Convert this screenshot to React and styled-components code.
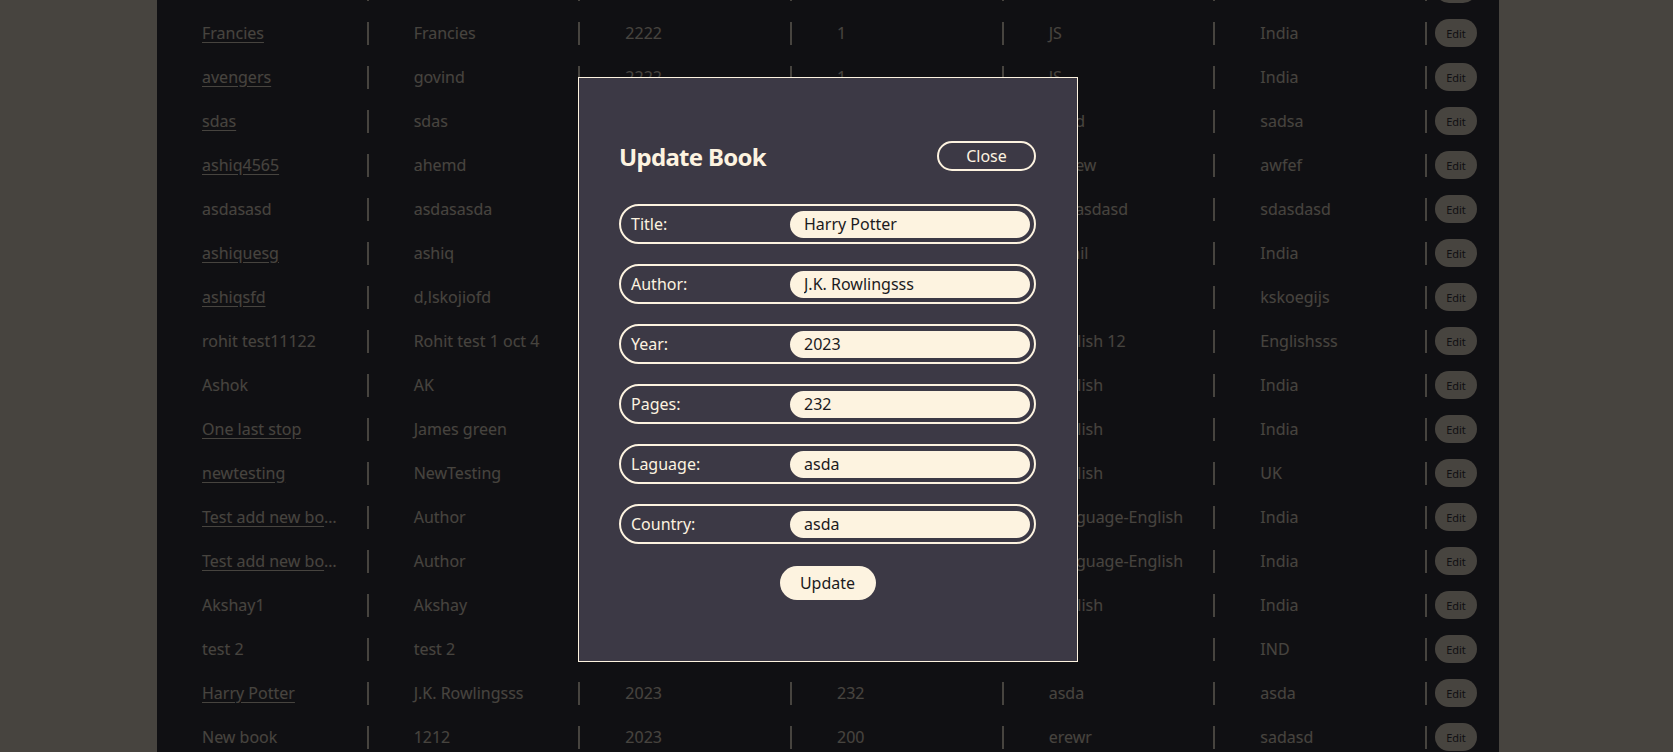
import React from 'react'
import styled, { createGlobalStyle } from 'styled-components'

const cream = '#fdf3e0'
const dark = '#3c3945'

const Global = createGlobalStyle`
  html, body {
    margin: 0;
    padding: 0;
    overflow: hidden;
    background: ${cream};
    font-family: "Noto Sans", "Open Sans", sans-serif;
  }
`

const Page = styled.main`
  width: 1342px;
  margin-left: 157px;
  margin-top: -33px;
  background: ${dark};
  color: ${cream};
`

const Row = styled.div`
  display: grid;
  grid-template-columns: repeat(6, 1fr) 72px;
  align-items: center;
  height: 44px;
`

const Cell = styled.div`
  height: 23px;
  line-height: 23px;
  font-size: 16px;
  padding: 0 27px 0 45px;
  border-right: 2px solid ${cream};
  white-space: nowrap;
  overflow: hidden;
  text-overflow: ellipsis;
`

const TitleLink = styled.a`
  color: ${cream};
  text-decoration: ${p => (p.$link ? 'underline' : 'none')};
  text-underline-offset: 3px;
`

const EditCell = styled.div`
  padding-left: 8px;
  display: flex;
  align-items: center;
`

const EditBtn = styled.button`
  width: 42px;
  height: 28px;
  border: none;
  border-radius: 14px;
  background: ${cream};
  color: ${dark};
  font-family: inherit;
  font-size: 11px;
  padding: 0;
`

const Overlay = styled.div`
  position: fixed;
  inset: 0;
  background: rgba(0, 0, 0, 0.72);
`

const Modal = styled.div`
  position: absolute;
  top: 77px;
  left: 578px;
  width: 500px;
  box-sizing: border-box;
  border: 1px solid ${cream};
  background: ${dark};
  padding: 63px 41px 61px 40px;
  display: flex;
  flex-direction: column;
`

const Header = styled.div`
  display: flex;
  justify-content: space-between;
  align-items: center;
  height: 30px;
`

const Heading = styled.h2`
  margin: 0;
  color: ${cream};
  font-size: 24px;
  font-weight: 700;
  letter-spacing: -0.7px;
`

const CloseBtn = styled.button`
  width: 99px;
  height: 30px;
  border: 2px solid ${cream};
  border-radius: 16px;
  background: transparent;
  color: ${cream};
  font-family: inherit;
  font-size: 16px;
  padding: 0;
`

const Form = styled.form`
  margin-top: 33px;
  display: flex;
  flex-direction: column;
  gap: 20px;
`

const Field = styled.label`
  display: flex;
  align-items: center;
  height: 40px;
  box-sizing: border-box;
  border: 2px solid ${cream};
  border-radius: 20px;
  padding: 0 4px 0 10px;
`

const Label = styled.span`
  width: 159px;
  flex-shrink: 0;
  color: ${cream};
  font-size: 16px;
`

const Input = styled.input`
  flex: 1;
  width: 0;
  min-width: 0;
  height: 27px;
  box-sizing: border-box;
  border: none;
  outline: none;
  border-radius: 14px;
  background: ${cream};
  color: #1b1a20;
  font-family: inherit;
  font-size: 16px;
  padding: 0 14px;
`

const UpdateBtn = styled.button`
  align-self: center;
  margin-top: 2px;
  width: 96px;
  height: 34px;
  border: none;
  border-radius: 17px;
  background: ${cream};
  color: #1b1a20;
  font-family: inherit;
  font-size: 16px;
  padding: 0;
`

const books = [
  ['asdasd', 'asd', '2021', '12', 'English', 'India', false],
  ['Francies', 'Francies', '2222', '1', 'JS', 'India', true],
  ['avengers', 'govind', '2222', '1', 'JS', 'India', true],
  ['sdas', 'sdas', '2021', '12', 'dsad', 'sadsa', true],
  ['ashiq4565', 'ahemd', '2022', '123', 'asdew', 'awfef', true],
  ['asdasasd', 'asdasasda', '2023', '12', 'asdasdasd', 'sdasdasd', false],
  ['ashiquesg', 'ashiq', '2023', '300', 'Tamil', 'India', true],
  ['ashiqsfd', 'd,lskojiofd', '2023', '12', 'sdf', 'kskoegijs', true],
  ['rohit test11122', 'Rohit test 1 oct 4', '2023', '100', 'English 12', 'Englishsss', false],
  ['Ashok', 'AK', '2023', '120', 'English', 'India', false],
  ['One last stop', 'James green', '2023', '250', 'English', 'India', true],
  ['newtesting', 'NewTesting', '2023', '100', 'English', 'UK', true],
  ['Test add new book', 'Author', '2023', '100', 'Language-English', 'India', true],
  ['Test add new book', 'Author', '2023', '100', 'Language-English', 'India', true],
  ['Akshay1', 'Akshay', '2023', '100', 'English', 'India', false],
  ['test 2', 'test 2', '2023', '2', 'EN', 'IND', false],
  ['Harry Potter', 'J.K. Rowlingsss', '2023', '232', 'asda', 'asda', true],
  ['New book', '1212', '2023', '200', 'erewr', 'sadasd', false],
]

const fields = [
  ['Title:', 'Harry Potter'],
  ['Author:', 'J.K. Rowlingsss'],
  ['Year:', '2023'],
  ['Pages:', '232'],
  ['Laguage:', 'asda'],
  ['Country:', 'asda'],
]

export default function App() {
  return (
    <>
      <Global />
      <Page>
        {books.map((b, i) => (
          <Row key={i}>
            <Cell>
              <TitleLink $link={b[6]}>{b[0]}</TitleLink>
            </Cell>
            <Cell>{b[1]}</Cell>
            <Cell>{b[2]}</Cell>
            <Cell>{b[3]}</Cell>
            <Cell>{b[4]}</Cell>
            <Cell>{b[5]}</Cell>
            <EditCell>
              <EditBtn>Edit</EditBtn>
            </EditCell>
          </Row>
        ))}
      </Page>
      <Overlay>
        <Modal>
          <Header>
            <Heading>Update Book</Heading>
            <CloseBtn>Close</CloseBtn>
          </Header>
          <Form onSubmit={e => e.preventDefault()}>
            {fields.map(([label, value]) => (
              <Field key={label}>
                <Label>{label}</Label>
                <Input defaultValue={value} />
              </Field>
            ))}
            <UpdateBtn>Update</UpdateBtn>
          </Form>
        </Modal>
      </Overlay>
    </>
  )
}
